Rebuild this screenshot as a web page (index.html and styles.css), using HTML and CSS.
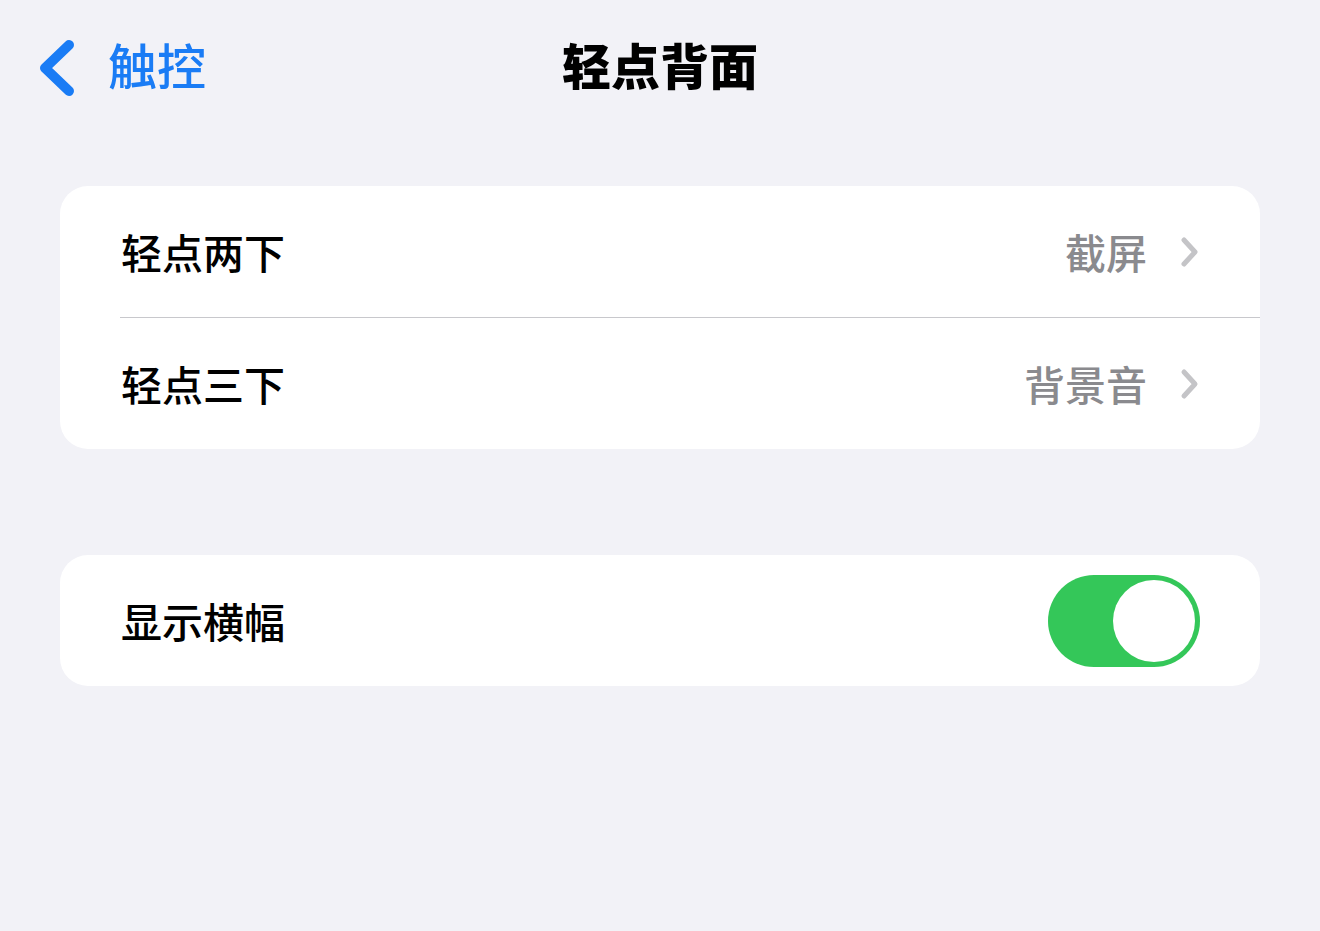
FILE: index.html
```html
<!DOCTYPE html>
<html lang="zh-CN">
<head>
<meta charset="utf-8">
<title>轻点背面</title>
<link rel="stylesheet" href="styles.css">
</head>
<body>
<div class="page">
  <header class="nav">
    <div class="nav-left">
      <svg class="back-icon" width="40" height="60" viewBox="0 0 40 60">
        <path d="M31 7 L7 30 L31 53" fill="none" stroke="#1a7cf5" stroke-width="10" stroke-linecap="round" stroke-linejoin="round"/>
      </svg>
      <span class="back-text">触控</span>
    </div>
    <h1 class="title">轻点背面</h1>
    <div class="nav-right"></div>
  </header>

  <section class="card">
    <div class="row">
      <span class="label">轻点两下</span>
      <span class="value">截屏</span>
      <svg class="chev" width="20" height="32" viewBox="0 0 20 32">
        <path d="M4 4 L15 16 L4 28" fill="none" stroke="#c4c4c7" stroke-width="5" stroke-linecap="round" stroke-linejoin="round"/>
      </svg>
    </div>
    <div class="sep"></div>
    <div class="row">
      <span class="label">轻点三下</span>
      <span class="value">背景音</span>
      <svg class="chev" width="20" height="32" viewBox="0 0 20 32">
        <path d="M4 4 L15 16 L4 28" fill="none" stroke="#c4c4c7" stroke-width="5" stroke-linecap="round" stroke-linejoin="round"/>
      </svg>
    </div>
  </section>

  <section class="card card-2">
    <div class="row">
      <span class="label">显示横幅</span>
      <div class="toggle"><div class="knob"></div></div>
    </div>
  </section>
</div>
</body>
</html>
```

FILE: styles.css
```css
* { box-sizing: border-box; }
html, body {
  margin: 0;
  padding: 0;
  background: #f2f2f7;
}
body {
  width: 1320px;
  height: 931px;
  overflow: hidden;
  font-family: "Noto Sans CJK SC", "Noto Sans", sans-serif;
}
.page {
  padding: 0 60px 0 60px;
}
.nav {
  display: grid;
  grid-template-columns: 1fr auto 1fr;
  align-items: center;
  height: 126px;
  margin: 0 -60px;
  padding: 0 38px;
}
.nav-left {
  display: flex;
  align-items: center;
  gap: 30px;
  padding-top: 4px;
}
.back-icon {
  display: block;
  margin-top: 6px;
}
.back-text {
  color: #1a7cf5;
  font-size: 49px;
  font-weight: 500;
  line-height: 1;
  margin-top: -4px;
}
.title {
  margin: 0;
  font-size: 49px;
  font-weight: 900;
  color: #000;
  line-height: 1;
}
.card {
  margin-top: 60px;
  background: #fff;
  border-radius: 28px;
  overflow: hidden;
}
.card-2 {
  margin-top: 106px;
}
.row {
  display: flex;
  align-items: center;
  height: 131px;
  padding: 0 60px 0 61px;
}
.label {
  flex: 1;
  font-size: 41px;
  font-weight: 500;
  color: #000;
  line-height: 1;
}
.value {
  font-size: 41px;
  font-weight: 500;
  color: #8a8a8e;
  line-height: 1;
  margin-right: 33px;
}
.chev { display: block; }
.sep {
  height: 1px;
  background: #c8c8cc;
  margin-left: 60px;
}
.toggle {
  width: 152px;
  height: 92px;
  border-radius: 46px;
  background: #34c759;
  display: flex;
  justify-content: flex-end;
  align-items: center;
  padding: 5px;
}
.knob {
  width: 82px;
  height: 82px;
  border-radius: 50%;
  background: #fff;
}
```
